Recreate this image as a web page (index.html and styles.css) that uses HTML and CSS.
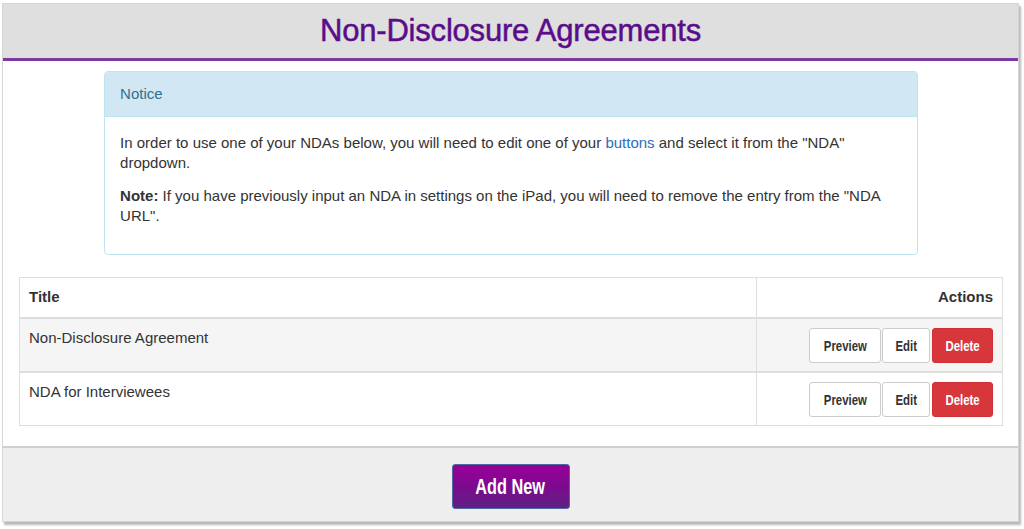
FILE: index.html
```html
<!doctype html>
<html lang="en" dir="ltr">
<head>
  <meta charset="utf-8" />
  <title>Non-Disclosure Agreements</title>
  <link rel="stylesheet" href="styles.css">
</head>
<body>

<div class="panel">
  <header class="panel-head">
    <h1>Non-Disclosure Agreements</h1>
  </header>

  <div class="panel-body">
    <div class="notice">
      <div class="notice-head">Notice</div>
      <div class="notice-body">
        <p>In order to use one of your NDAs below, you will need to edit one of your <a href="#">buttons</a> and select it from the "NDA" dropdown.</p>
        <p><strong>Note:</strong> If you have previously input an NDA in settings on the iPad, you will need to remove the entry from the "NDA URL".</p>
      </div>
    </div>

    <table class="nda-table">
      <thead>
        <tr>
          <th class="col-title">Title</th>
          <th class="col-actions">Actions</th>
        </tr>
      </thead>
      <tbody>
        <tr>
          <td>Non-Disclosure Agreement</td>
          <td class="col-actions">
            <span class="btn-group">
              <button class="btn btn-preview"><span>Preview</span></button>
              <button class="btn btn-edit"><span>Edit</span></button>
              <button class="btn btn-danger"><span>Delete</span></button>
            </span>
          </td>
        </tr>
        <tr>
          <td>NDA for Interviewees</td>
          <td class="col-actions">
            <span class="btn-group">
              <button class="btn btn-preview"><span>Preview</span></button>
              <button class="btn btn-edit"><span>Edit</span></button>
              <button class="btn btn-danger"><span>Delete</span></button>
            </span>
          </td>
        </tr>
      </tbody>
    </table>
  </div>

  <footer class="panel-foot">
    <button class="btn-add"><span>Add New</span></button>
  </footer>
</div>

</body>
</html>
```

FILE: styles.css
```css
html,
body {
  background-color: #fff;
}
body {
  font-family: "Liberation Sans", Helvetica, Arial, sans-serif;
  font-size: 15px;
  line-height: 20px;
  color: #333;
  margin: 0;
  padding: 3px 5px 5px 2px;
}
.panel {
  border: 1px solid #d6d6d6;
  box-shadow: 2px 3px 2px rgba(0, 0, 0, 0.28);
  background-color: #fff;
}
.panel-head {
  background-color: #dfdfdf;
  border-bottom: 3px solid #7a3a9e;
  height: 54px;
  display: flex;
  align-items: center;
  justify-content: center;
}
.panel-head h1 {
  margin: 0;
  font-size: 31px;
  font-weight: normal;
  color: #5a0d8a;
  letter-spacing: -0.2px;
  -webkit-text-stroke: 0.5px #5a0d8a;
}
.panel-body {
  padding: 10px 15px 20px 16px;
  border-bottom: 2px solid #cfcfcf;
}
.notice {
  width: 82.5%;
  margin: 0 auto;
  border: 1px solid #bfe3f0;
  border-radius: 4px;
  overflow: hidden;
}
.notice-head {
  background-color: #d2e7f4;
  color: #31708f;
  padding: 12px 15px;
  border-bottom: 1px solid #bfe3f0;
}
.notice-body {
  padding: 16px 15px 28px;
}
.notice-body p {
  margin: 0 0 13px;
}
.notice-body p:last-child {
  margin-bottom: 0;
}
.notice-body a {
  color: #2a6ebb;
  text-decoration: none;
}
.nda-table {
  width: 100%;
  margin-top: 22px;
  border-collapse: collapse;
  border: 1px solid #ddd;
}
.nda-table th,
.nda-table td {
  border: 1px solid #ddd;
  border-width: 2px 1px 0;
  text-align: left;
  vertical-align: top;
  padding: 9px 9px 8px;
}
.nda-table th {
  border-top-width: 1px;
  padding: 9px 9px 10px;
}
.nda-table .col-title {
  width: 75%;
}
.nda-table .col-actions {
  text-align: right;
}
.nda-table tbody tr:nth-child(odd) {
  background-color: #f5f5f5;
}
.btn-group {
  display: inline-flex;
  gap: 1px;
}
.btn,
.btn-add {
  font-family: "Liberation Sans", Helvetica, Arial, sans-serif;
  font-weight: bold;
  cursor: pointer;
  padding: 0;
}
.btn span,
.btn-add span {
  display: inline-block;
  transform: scaleX(0.76);
}
.btn {
  font-size: 15px;
  color: #333;
  background-color: #fff;
  border: 1px solid #ccc;
  border-radius: 3px;
  height: 35px;
}
.btn-preview {
  width: 72px;
}
.btn-edit {
  width: 48px;
}
.btn-danger {
  width: 61px;
  margin-left: 1px;
  color: #fff;
  background-color: #d7373a;
  border-color: #cf3033;
}
.panel-foot {
  background-color: #eee;
  padding: 16px 0 12px;
  text-align: center;
}
.btn-add {
  font-size: 22px;
  color: #fff;
  width: 118px;
  height: 45px;
  border: 1px solid #4d6aa3;
  border-radius: 3px;
  background: linear-gradient(#980098, #7c0a8e 50%, #5e2181);
}
.btn-add span {
  transform: scaleX(0.74);
}
```
